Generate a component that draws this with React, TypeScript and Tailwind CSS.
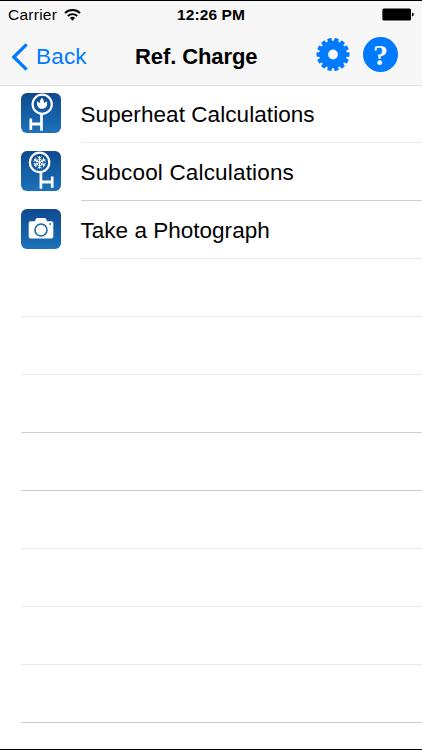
import type { ReactNode } from "react";

const TEETH = Array.from({ length: 14 }, (_, i) => (i + 0.5) * (360 / 14));

function WifiIcon() {
  return (
    <svg width="17" height="12" viewBox="0 0 17 12" fill="none" stroke="#000" strokeWidth="1.9">
      <path d="M1 4.1a10.8 10.8 0 0 1 15 0" />
      <path d="M3.8 7a6.8 6.8 0 0 1 9.4 0" />
      <path d="M8.5 11.7L5.9 9.1a3.7 3.7 0 0 1 5.2 0z" fill="#000" stroke="none" />
    </svg>
  );
}

function BatteryIcon() {
  return (
    <svg width="32" height="13" viewBox="0 0 32 13">
      <rect x="0.4" y="0.4" width="28.6" height="12.2" rx="1.5" fill="#000" />
      <path d="M30 4.6q1.8 .5 1.8 1.9t-1.8 1.9z" fill="#000" />
    </svg>
  );
}

function GearIcon() {
  return (
    <svg width="34" height="34" viewBox="-17 -16.5 34 34">
      <g fill="#007aff">
        {TEETH.map((angle) => (
          <rect key={angle} x="-2.2" y="-16.5" width="4.4" height="6" rx="0.6" transform={`rotate(${angle})`} />
        ))}
        <circle r="13.8" />
      </g>
      <circle r="4.9" fill="#f7f7f7" />
    </svg>
  );
}

function HelpIcon() {
  return (
    <div className="flex h-[35px] w-[35px] items-center justify-center rounded-full bg-[#007aff] font-['Liberation_Serif',serif] text-[30px] leading-none font-bold text-[#f7f7f7]">
      ?
    </div>
  );
}

function SuperheatIcon() {
  return (
    <svg width="40" height="40" viewBox="0 0 40 40" fill="none" stroke="#fff">
      <circle cx="21.2" cy="11.2" r="9.6" strokeWidth="2.2" />
      <path d="M20.5 20.5v17.2M9.8 25.5v11.5" strokeWidth="2.7" />
      <path d="M10 31h10" strokeWidth="2.8" />
      <path
        d="M21 4.8c1.8 2 2.2 3.6 2 5.3.9-.5 1.6-1.5 3.2-1.9-.6 1.3.3 2.3-.2 4.1-.6 2.3-2.4 3.5-4.8 3.5s-4.2-1.2-4.9-3.4c-.4-1.5 0-2.6-.5-3.9 1.5.3 2.2 1 3 1.7-.2-2 .7-3.7 2.2-5.4z"
        fill="#fff"
        stroke="none"
      />
    </svg>
  );
}

function SubcoolIcon() {
  return (
    <svg width="40" height="40" viewBox="0 0 40 40" fill="none" stroke="#fff">
      <circle cx="18.6" cy="11.4" r="9.7" strokeWidth="2.2" />
      <path d="M19.9 20.5v17.2M31.2 25.5v11.3" strokeWidth="2.7" />
      <path d="M20 31h11" strokeWidth="2.8" />
      <g transform="translate(18.6 11.4)" strokeWidth="1">
        {[0, 60, 120, 180, 240, 300].map((angle) => (
          <path key={angle} d="M0 0v-6.4M-2.1-5.8L0-4 2.1-5.8M-1.4-3.4L0-2.2 1.4-3.4" transform={`rotate(${angle})`} />
        ))}
      </g>
    </svg>
  );
}

function CameraIcon() {
  return (
    <svg width="40" height="40" viewBox="0 0 40 40">
      <path
        d="M9.5 12.2h4.2l1.5-2.7q.3-.6 1-.6h7.6q.7 0 1 .6l1.5 2.7h4.2q1.8 0 1.8 1.8v13.8q0 1.8-1.8 1.8h-21q-1.8 0-1.8-1.8V14q0-1.8 1.8-1.8z"
        fill="#fff"
      />
      <circle cx="20" cy="21" r="6" fill="none" stroke="#1963a5" strokeWidth="1.5" />
      <circle cx="29.2" cy="15" r="0.9" fill="#1963a5" />
    </svg>
  );
}

interface Item {
  label: string;
  icon: ReactNode;
  row: string;
  cell: string;
}

const items: Item[] = [
  {
    label: "Superheat Calculations",
    icon: <SuperheatIcon />,
    row: "h-[57px] pt-[7px]",
    cell: "border-[#e9e9eb] tracking-[0.07px]",
  },
  {
    label: "Subcool Calculations",
    icon: <SubcoolIcon />,
    row: "h-[58px] pt-[8px]",
    cell: "border-[#cfcfd2] tracking-[0.17px]",
  },
  {
    label: "Take a Photograph",
    icon: <CameraIcon />,
    row: "h-[58px] pt-[8px]",
    cell: "border-[#e9e9eb] tracking-[0.02px]",
  },
];

const emptyRows = [
  "border-[#e9e9eb]",
  "border-[#e9e9eb]",
  "border-[#cfcfd2]",
  "border-[#cfcfd2]",
  "border-[#e9e9eb]",
  "border-[#e9e9eb]",
  "border-[#e9e9eb]",
  "border-[#cfcfd2]",
];

export default function App() {
  return (
    <div className="flex h-[750px] w-[422px] flex-col overflow-hidden border-y border-black bg-white font-['Liberation_Sans',Arial,sans-serif] text-black">
      <header className="h-[85px] shrink-0 border-b border-[#dcdcde] bg-[#f7f7f7]">
        <div className="grid h-[27px] grid-cols-3 items-center px-2">
          <div className="flex items-center gap-[7px]">
            <span className="text-[15.5px] tracking-[0.25px]">Carrier</span>
            <WifiIcon />
          </div>
          <span className="text-center text-[15.5px] font-bold tracking-[0.1px]">12:26 PM</span>
          <div className="flex justify-end">
            <BatteryIcon />
          </div>
        </div>

        <div className="flex h-[57px] items-center pl-[11px]">
          <button className="flex w-[124px] items-center gap-2 text-[22.5px] tracking-[0.2px] text-[#007aff]">
            <svg width="17" height="28" viewBox="0 0 17 28" fill="none" stroke="#007aff" strokeWidth="3.3">
              <path d="M15.6 1.3L2.8 14l12.8 12.7" />
            </svg>
            Back
          </button>
          <h1 className="w-[181px] text-[22px] font-bold tracking-[-0.1px]">Ref. Charge</h1>
          <div className="flex items-center gap-[13px] pb-[4px]">
            <GearIcon />
            <HelpIcon />
          </div>
        </div>
      </header>

      <ul className="pl-[21px]">
        {items.map((item) => (
          <li key={item.label} className="flex">
            <div className={`w-[60px] shrink-0 ${item.row}`}>
              <div className="h-10 w-10 overflow-hidden rounded-[6px] bg-gradient-to-b from-[#0e4a90] to-[#1c72b9]">
                {item.icon}
              </div>
            </div>
            <div className={`flex flex-1 items-center border-b pt-[2px] text-[22.5px] ${item.cell}`}>
              <span className="-ml-[0.5px]">{item.label}</span>
            </div>
          </li>
        ))}
        {emptyRows.map((border, i) => (
          <li key={i} className={`h-[58px] border-b ${border}`} />
        ))}
      </ul>
    </div>
  );
}
